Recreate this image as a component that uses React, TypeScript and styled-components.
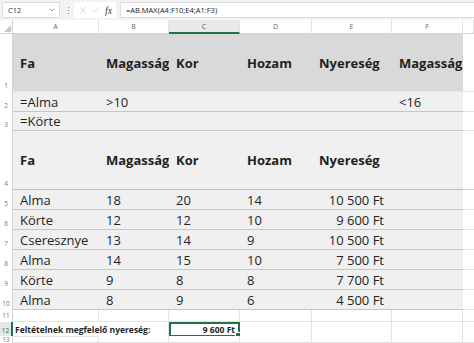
import React from 'react';
import styled, { createGlobalStyle, css } from 'styled-components';
import { X, Check, ChevronDown } from 'lucide-react';

const GlobalStyle = createGlobalStyle`
  html, body {
    margin: 0;
    padding: 0;
    background: #ffffff;
    overflow: hidden;
  }
  body {
    font-family: "Open Sans", "Noto Sans", sans-serif;
    color: #1f1f1f;
  }
`;

const COLS = '13px 86px 70px 71px 72px 80px 71px 1fr';
const GREEN = '#217346';

const Page = styled.div`
  width: 474px;
  height: 343px;
  overflow: hidden;
  display: flex;
  flex-direction: column;
`;

const FormulaBar = styled.div`
  height: 20px;
  display: flex;
  align-items: center;
  gap: 4px;
  padding: 0 0 0 2px;
  background: #f3f3f3;
  box-sizing: border-box;
`;

const NameBox = styled.div`
  width: 58px;
  height: 16px;
  box-sizing: border-box;
  background: #fff;
  border: 1px solid #dcdcdc;
  display: flex;
  align-items: center;
  justify-content: space-between;
  padding: 0 3px 0 5px;
  font-size: 7.5px;
  color: #333;
`;

const Dots = styled.span`
  font-size: 9px;
  color: #777;
  width: 6px;
  text-align: center;
`;

const IconBox = styled.div`
  width: 42px;
  height: 16px;
  box-sizing: border-box;
  background: #fff;
  display: flex;
  align-items: center;
  justify-content: space-around;
  padding: 0 2px;
  color: #c4c4c4;
`;

const Fx = styled.span`
  font-family: "Liberation Serif", serif;
  font-style: italic;
  font-size: 10px;
  color: #444;
`;

const FormulaInput = styled.div`
  flex: 1;
  height: 16px;
  box-sizing: border-box;
  background: #fff;
  border: 1px solid #dcdcdc;
  border-right: none;
  display: flex;
  align-items: center;
  padding-left: 5px;
  font-size: 7.5px;
  color: #222;
`;

const Row = styled.div<{ $h: number }>`
  display: grid;
  grid-template-columns: ${COLS};
  height: ${(p) => p.$h}px;
  flex-shrink: 0;
`;

const Corner = styled.div`
  background: #fff;
  border-right: 1px solid #d4d4d4;
  border-bottom: 1px solid #d4d4d4;
  box-sizing: border-box;
  display: flex;
  align-items: flex-end;
  justify-content: flex-end;
  padding: 0 1px 1px 0;

  &::after {
    content: '';
    width: 0;
    height: 0;
    border-left: 7px solid transparent;
    border-bottom: 7px solid #c8c8c8;
  }
`;

const ColHead = styled.div<{ $active?: boolean }>`
  box-sizing: border-box;
  display: flex;
  align-items: center;
  justify-content: center;
  font-size: 7px;
  color: #666;
  background: #fff;
  border-right: 1px solid #e2e2e2;
  border-bottom: 1px solid #d4d4d4;

  ${(p) =>
    p.$active &&
    css`
      background: #e9e9e9;
      color: ${GREEN};
      border-bottom: 2px solid ${GREEN};
    `}
`;

const RowHead = styled.div<{ $active?: boolean; $pad?: number }>`
  box-sizing: border-box;
  display: flex;
  align-items: flex-end;
  justify-content: center;
  font-size: 6.5px;
  line-height: 1;
  padding-bottom: ${(p) => p.$pad ?? 3}px;
  color: #777;
  background: #fff;
  border-right: 1px solid #d4d4d4;

  ${(p) =>
    p.$active &&
    css`
      color: ${GREEN};
      background: #e6e6e6;
      border-right: 2px solid ${GREEN};
    `}
`;

type Fill = 'dark' | 'light' | 'none';

const fillColor: Record<Fill, string> = {
  dark: '#d9d9d9',
  light: '#f0f0f0',
  none: '#ffffff',
};

const Cell = styled.div<{
  $fill: Fill;
  $bold?: boolean;
  $right?: boolean;
  $small?: boolean;
  $line?: string;
  $over?: boolean;
}>`
  position: relative;
  box-sizing: border-box;
  display: flex;
  align-items: center;
  justify-content: ${(p) => (p.$right ? 'flex-end' : 'flex-start')};
  padding: 0 8px 0 7px;
  white-space: nowrap;
  overflow: visible;
  background: ${(p) => fillColor[p.$fill]};
  font-size: ${(p) => (p.$small ? '8.5px' : '13px')};
  font-weight: ${(p) => (p.$bold ? 700 : 400)};
  color: #1f1f1f;
  border-bottom: 1px solid ${(p) => p.$line ?? '#e2e2e2'};
  border-right: ${(p) => (p.$fill === 'none' && !p.$over ? '1px solid #e2e2e2' : 'none')};
  z-index: ${(p) => (p.$over ? 3 : p.$fill === 'none' ? 0 : 1)};
`;

const Selected = styled(Cell)`
  border: 2px solid ${GREEN};
  padding-right: 3px;

  &::after {
    content: '';
    position: absolute;
    right: -3px;
    bottom: -3px;
    width: 4px;
    height: 4px;
    background: ${GREEN};
    border: 1px solid #fff;
  }
`;

const Label = styled.span`
  margin-left: -5px;
`;

type CellData = string | { t: string; r?: boolean };

interface RowData {
  n: number;
  h: number;
  fill: Fill;
  bold?: boolean;
  line?: string;
  cells: CellData[];
}

const rows: RowData[] = [
  { n: 1, h: 58, fill: 'dark', bold: true, line: '#e6e6e6', cells: ['Fa', 'Magasság', 'Kor', 'Hozam', 'Nyereség', 'Magasság'] },
  { n: 2, h: 20, fill: 'light', line: '#c6c6c6', cells: ['=Alma', '>10', '', '', '', '<16'] },
  { n: 3, h: 19, fill: 'light', line: '#c6c6c6', cells: ['=Körte', '', '', '', '', ''] },
  { n: 4, h: 59, fill: 'light', bold: true, line: '#bdbdbd', cells: ['Fa', 'Magasság', 'Kor', 'Hozam', 'Nyereség', ''] },
  { n: 5, h: 20, fill: 'light', line: '#c6c6c6', cells: ['Alma', '18', '20', '14', { t: '10 500 Ft', r: true }, ''] },
  { n: 6, h: 20, fill: 'light', line: '#c6c6c6', cells: ['Körte', '12', '12', '10', { t: '9 600 Ft', r: true }, ''] },
  { n: 7, h: 20, fill: 'light', line: '#c6c6c6', cells: ['Cseresznye', '13', '14', '9', { t: '10 500 Ft', r: true }, ''] },
  { n: 8, h: 20, fill: 'light', line: '#c6c6c6', cells: ['Alma', '14', '15', '10', { t: '7 500 Ft', r: true }, ''] },
  { n: 9, h: 20, fill: 'light', line: '#c6c6c6', cells: ['Körte', '9', '8', '8', { t: '7 700 Ft', r: true }, ''] },
  { n: 10, h: 20, fill: 'light', line: '#c6c6c6', cells: ['Alma', '8', '9', '6', { t: '4 500 Ft', r: true }, ''] },
];

const EmptyCells: React.FC<{ count: number }> = ({ count }) => (
  <>
    {Array.from({ length: count }).map((_, i) => (
      <Cell key={i} $fill="none" />
    ))}
  </>
);

const App: React.FC = () => {
  return (
    <Page>
      <GlobalStyle />
      <FormulaBar>
        <NameBox>
          <span>C12</span>
          <ChevronDown size={8} color="#666" strokeWidth={2} />
        </NameBox>
        <Dots>⋮</Dots>
        <IconBox>
          <X size={10} strokeWidth={1.5} />
          <Check size={10} strokeWidth={1.5} />
          <Fx>fx</Fx>
        </IconBox>
        <FormulaInput>=AB.MAX(A4:F10;E4;A1:F3)</FormulaInput>
      </FormulaBar>

      <Row $h={14}>
        <Corner />
        {['A', 'B', 'C', 'D', 'E', 'F'].map((c) => (
          <ColHead key={c} $active={c === 'C'}>
            {c}
          </ColHead>
        ))}
        <ColHead />
      </Row>

      {rows.map((row) => (
        <Row key={row.n} $h={row.h}>
          <RowHead>{row.n}</RowHead>
          {row.cells.map((c, i) => {
            const text = typeof c === 'string' ? c : c.t;
            const right = typeof c === 'string' ? false : c.r;
            return (
              <Cell key={i} $fill={row.fill} $bold={row.bold} $right={right} $line={row.line}>
                {text}
              </Cell>
            );
          })}
          <Cell $fill="none" $line={row.n === 4 ? '#d0d0d0' : '#e2e2e2'} />
        </Row>
      ))}

      <Row $h={12}>
        <RowHead>11</RowHead>
        <EmptyCells count={7} />
      </Row>

      <Row $h={14}>
        <RowHead $active>12</RowHead>
        <Cell $fill="none" $bold $small $over>
          <Label>Feltételnek megfelelő nyereség:</Label>
        </Cell>
        <Cell $fill="none" />
        <Selected $fill="none" $bold $small $right>
          9 600 Ft
        </Selected>
        <EmptyCells count={4} />
      </Row>

      <Row $h={7}>
        <RowHead $pad={0}>13</RowHead>
        <EmptyCells count={7} />
      </Row>
    </Page>
  );
};

export default App;
